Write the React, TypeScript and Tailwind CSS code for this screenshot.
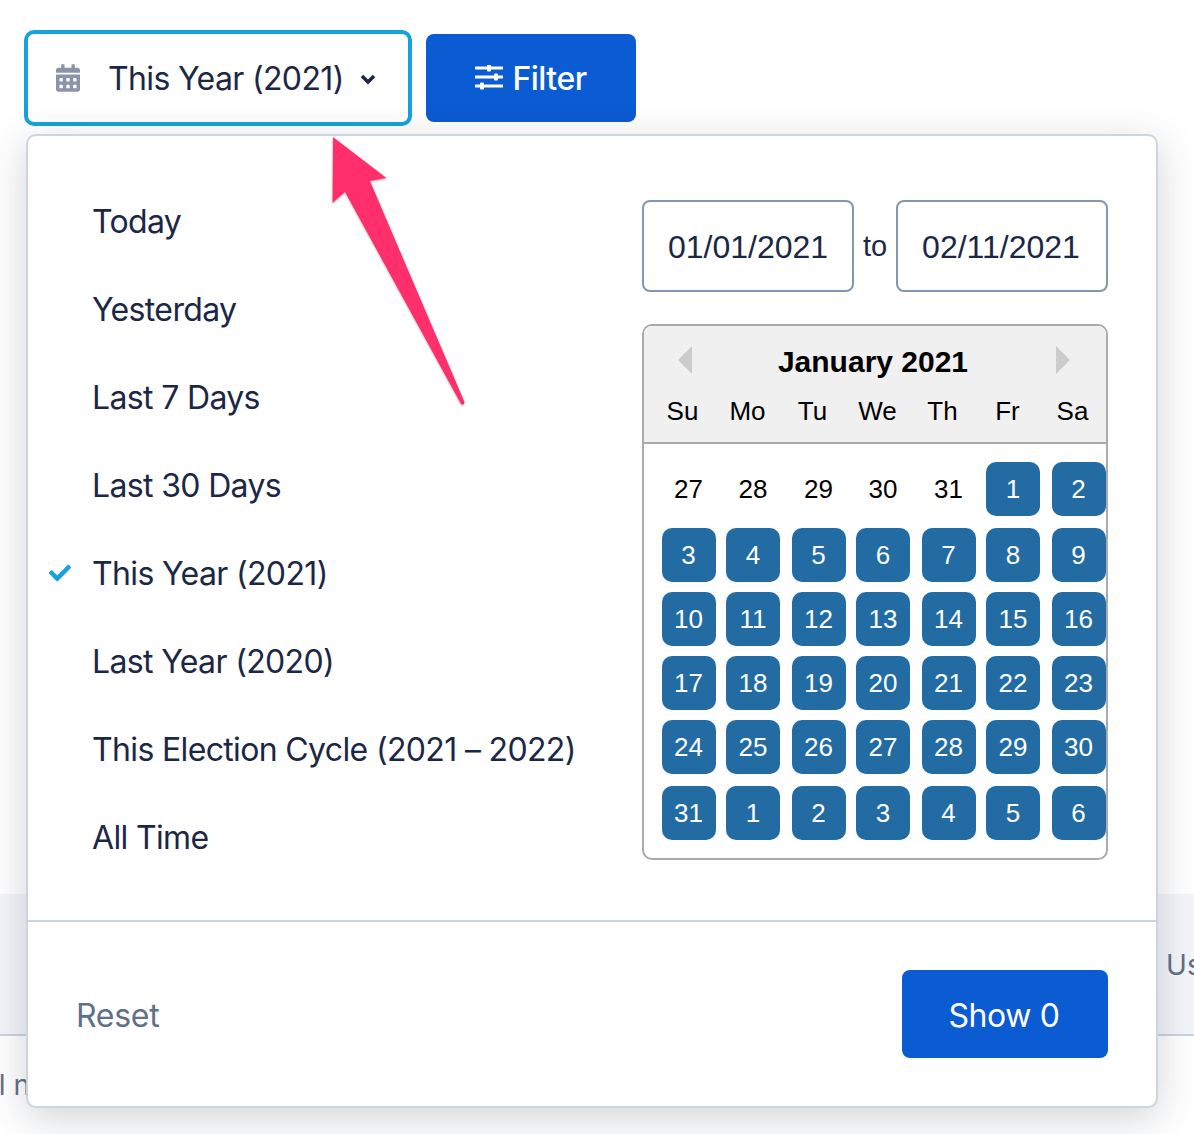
import { FaCalendarAlt, FaCheck } from 'react-icons/fa';

const ranges = [
  'Today',
  'Yesterday',
  'Last 7 Days',
  'Last 30 Days',
  'This Year (2021)',
  'Last Year (2020)',
  'This Election Cycle (2021 – 2022)',
  'All Time',
];

const weekDays = ['Su', 'Mo', 'Tu', 'We', 'Th', 'Fr', 'Sa'];

const days = [
  27, 28, 29, 30, 31, 1, 2, 3, 4, 5, 6, 7, 8, 9, 10, 11, 12, 13, 14, 15, 16, 17, 18, 19, 20, 21, 22, 23, 24, 25, 26,
  27, 28, 29, 30, 31, 1, 2, 3, 4, 5, 6,
];

function SlidersIcon() {
  return (
    <svg width="28" height="26" viewBox="0 0 28 26" fill="#fff">
      <rect x="0" y="1.500" width="28" height="3" rx="0.500" />
      <rect x="12" y="-0.500" width="4" height="7" rx="1" />
      <rect x="0" y="10.500" width="28" height="3" rx="0.500" />
      <rect x="19" y="8.500" width="4" height="7" rx="1" />
      <rect x="0" y="19.500" width="28" height="3" rx="0.500" />
      <rect x="5" y="17.500" width="4" height="7" rx="1" />
    </svg>
  );
}

function PinkArrow() {
  return (
    <svg
      className="absolute left-[320px] top-[125px] drop-shadow-[0_1px_1px_rgba(0,0,0,0.3)]"
      width="160"
      height="295"
      viewBox="320 125 160 295"
    >
      <path
        d="M333 137 L386.500 178 L370 181 L464.500 402 Q464 406 461 404 L345 192 L332.500 203 Z"
        fill="#ff2f6b"
      />
    </svg>
  );
}

function Calendar() {
  return (
    <div className="mt-[32px] h-[536px] w-[466px] overflow-hidden rounded-[10px] border-2 border-[#aaaaaa] [font-family:'Liberation_Sans',sans-serif]">
      <div className="h-[118px] border-b-2 border-[#aaaaaa] bg-[#f0f0f0]">
        <div className="flex h-[70px] items-center justify-between pr-[36px] pb-[2px] pl-[34px]">
          <div className="h-0 w-0 border-y-[14px] border-r-[14px] border-y-transparent border-r-[#cccccc]" />
          <div className="mt-[4px] mr-[2px] text-[30px] leading-none font-bold text-black">January 2021</div>
          <div className="h-0 w-0 border-y-[14px] border-l-[14px] border-y-transparent border-l-[#cccccc]" />
        </div>
        <div className="grid grid-cols-[repeat(7,65px)] pl-[6px]">
          {weekDays.map((d) => (
            <div key={d} className="text-center text-[26px] leading-[30px] text-black">
              {d}
            </div>
          ))}
        </div>
      </div>
      <div className="grid grid-cols-[64px_66px_64px_66px_64px_66px_54px] grid-rows-[66px_64px_64px_64px_66px_54px] pt-[18px] pl-[18px]">
        {days.map((d, i) => {
          const nudge = i % 2 === 0 ? 'pr-[1px]' : '';
          return i < 5 ? (
            <div key={i} className={`flex h-[54px] w-[54px] items-center justify-center text-[26px] text-black ${nudge}`}>
              {d}
            </div>
          ) : (
            <div
              key={i}
              className={`flex h-[54px] w-[54px] items-center justify-center rounded-[10px] bg-[#226ba3] text-[26px] text-white ${(i % 7) % 2 === 0 ? 'pr-[1px]' : ''}`}
            >
              {d}
            </div>
          );
        })}
      </div>
    </div>
  );
}

export default function App() {
  return (
    <div className="relative h-[1134px] w-[1194px] overflow-hidden bg-white [font-family:Inter,sans-serif] text-[#1c2746]">
      {/* Toolbar */}
      <div className="flex items-center gap-[14px] pt-[30px] pl-[24px]">
        <div className="flex h-[96px] w-[388px] items-center rounded-[10px] border-4 border-[#17a2dc] pl-[28px]">
          <FaCalendarAlt className="h-[28px] w-[24px] text-[#8a94a8]" />
          <span className="mt-[2px] ml-[28px] text-[32px] leading-none tracking-[-0.65px]">This Year (2021)</span>
          <svg className="mt-[1px] ml-[16px]" width="16" height="12" viewBox="0 0 16 12" fill="none">
            <path d="M2 3 L8 9 L14 3" stroke="#1c2746" strokeWidth="3.500" />
          </svg>
        </div>
        <div className="flex h-[88px] w-[210px] items-center justify-center gap-[9px] rounded-[8px] bg-[#0b5bd3] text-[32px] font-medium tracking-[-0.5px] text-white">
          <SlidersIcon />
          <span className="mt-[2px] leading-none">Filter</span>
        </div>
      </div>

      {/* Table behind the popover */}
      <div className="mt-[768px] flex h-[142px] items-center justify-end border-b-2 border-[#cbd5e0] bg-[#f5f6fa] pt-[1px]">
        <span className="-mr-[24px] text-[28px] text-[#5f7087]">Use</span>
      </div>
      <div className="-ml-[8px] pt-[29px] text-[28px] leading-[40px] text-[#5f7087]">ll n</div>

      {/* Date range popover */}
      <div className="absolute top-[134px] left-[26px] w-[1132px] rounded-[10px] border-2 border-[#cbd5e0] bg-white shadow-[0_10px_40px_rgba(45,55,72,0.22)]">
        <div className="flex h-[784px]">
          <div className="w-[614px] pt-[41px] pl-[64px]">
            {ranges.map((r) => (
              <div key={r} className="relative flex h-[88px] items-center pt-[1px] text-[32px] tracking-[-0.65px]">
                {r === 'This Year (2021)' && (
                  <FaCheck className="absolute top-[33px] left-[-43px] h-[22px] w-[22px] text-[#17a2dc]" />
                )}
                {r}
              </div>
            ))}
          </div>
          <div className="pt-[64px]">
            <div className="flex items-center">
              <div className="flex h-[92px] w-[212px] items-center justify-center rounded-[8px] border-2 border-[#8496b0] pt-[2px] text-[32px] [font-family:'Liberation_Sans',sans-serif]">
                01/01/2021
              </div>
              <span className="w-[42px] pt-[2px] text-center text-[29px] [font-family:'Liberation_Sans',sans-serif]">to</span>
              <div className="flex h-[92px] w-[212px] items-center justify-center rounded-[8px] border-2 border-[#8496b0] pt-[2px] pr-[2px] text-[32px] [font-family:'Liberation_Sans',sans-serif]">
                02/11/2021
              </div>
            </div>
            <Calendar />
          </div>
        </div>
        <div className="flex h-[186px] items-center justify-between border-t-2 border-[#cbd5e0] pr-[48px] pl-[48px]">
          <span className="mt-[4px] text-[32px] tracking-[-0.3px] text-[#5f7087]">Reset</span>
          <div className="flex h-[88px] w-[206px] items-center justify-center rounded-[8px] bg-[#0b5bd3] pt-[4px] pr-[2px] text-[32px] tracking-[-0.4px] text-white">
            Show 0
          </div>
        </div>
      </div>

      <PinkArrow />
    </div>
  );
}
